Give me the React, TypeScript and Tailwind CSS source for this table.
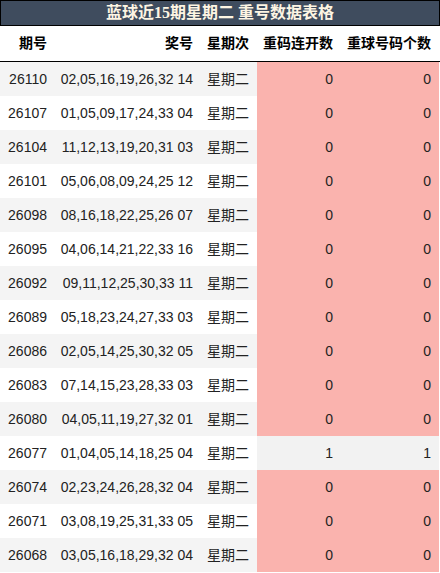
import React from 'react';

const rows: [string, string, number, number][] = [
  ['26110', '02,05,16,19,26,32 14', 0, 0],
  ['26107', '01,05,09,17,24,33 04', 0, 0],
  ['26104', '11,12,13,19,20,31 03', 0, 0],
  ['26101', '05,06,08,09,24,25 12', 0, 0],
  ['26098', '08,16,18,22,25,26 07', 0, 0],
  ['26095', '04,06,14,21,22,33 16', 0, 0],
  ['26092', '09,11,12,25,30,33 11', 0, 0],
  ['26089', '05,18,23,24,27,33 03', 0, 0],
  ['26086', '02,05,14,25,30,32 05', 0, 0],
  ['26083', '07,14,15,23,28,33 03', 0, 0],
  ['26080', '04,05,11,19,27,32 01', 0, 0],
  ['26077', '01,04,05,14,18,25 04', 1, 1],
  ['26074', '02,23,24,26,28,32 04', 0, 0],
  ['26071', '03,08,19,25,31,33 05', 0, 0],
  ['26068', '03,05,16,18,29,32 04', 0, 0],
];

const cols = 'grid grid-cols-[55px_146px_56px_84px_98px]';

const App = () => {
  return (
    <div className="w-[440px] bg-white font-['Liberation_Sans','Noto_Sans_CJK_SC',sans-serif] text-[14px] text-[#222]">
      <div className="h-[26px] border border-black bg-[#3f4c5e] flex items-center justify-center">
        <h1 className="font-['Liberation_Serif','Noto_Sans_CJK_SC',serif] font-bold text-[16px] text-[#fdf5e3] leading-none">
          蓝球近15期星期二 重号数据表格
        </h1>
      </div>

      <div className={`${cols} h-[36px] border-b border-black font-bold text-black`}>
        <div className="flex items-center justify-end pr-2">期号</div>
        <div className="flex items-center justify-end pr-2">奖号</div>
        <div className="flex items-center justify-end pr-2">星期次</div>
        <div className="flex items-center justify-end pr-2">重码连开数</div>
        <div className="flex items-center justify-end pr-2">重球号码个数</div>
      </div>

      {rows.map(([period, nums, a, b], i) => {
        const stripe = i % 2 === 0 ? 'bg-[#f4f4f4]' : 'bg-white';
        const hit = a > 0 ? 'bg-[#f2f2f2]' : 'bg-[#fab3ae]';
        return (
          <div key={period} className={`${cols} h-[34px]`}>
            <div className={`${stripe} flex items-center justify-end pr-2`}>{period}</div>
            <div className={`${stripe} flex items-center justify-end pr-2`}>{nums}</div>
            <div className={`${stripe} flex items-center justify-end pr-2`}>星期二</div>
            <div className={`${hit} flex items-center justify-end pr-2`}>{a}</div>
            <div className={`${hit} flex items-center justify-end pr-2`}>{b}</div>
          </div>
        );
      })}
    </div>
  );
};

export default App;
